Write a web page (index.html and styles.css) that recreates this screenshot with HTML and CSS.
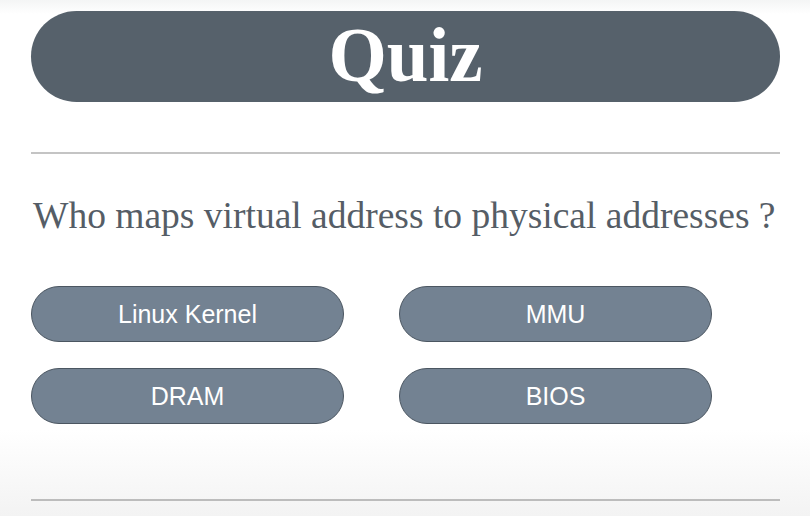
FILE: index.html
```html
<!DOCTYPE html>
<html>
<head>
<meta charset="utf-8">
<link rel="stylesheet" href="styles.css">
</head>
<body>
<main class="quiz">
  <header class="title-bar"><h1 class="title">Quiz</h1></header>
  <hr class="rule rule-top">
  <p class="question">Who maps virtual address to physical addresses ?</p>
  <div class="answers">
    <button class="answer">Linux Kernel</button>
    <button class="answer">MMU</button>
    <button class="answer">DRAM</button>
    <button class="answer">BIOS</button>
  </div>
  <hr class="rule rule-bottom">
</main>
</body>
</html>
```
FILE: styles.css
```css
html, body {
  margin: 0;
  height: 100%;
}
body {
  background: linear-gradient(to bottom, #f4f5f5 0px, #ffffff 14px, #ffffff 430px, #f3f3f3 516px);
  font-family: "Liberation Serif", "Times New Roman", serif;
}
.quiz {
  padding: 11px 30px 0 31px;
  display: flex;
  flex-direction: column;
}
.title-bar {
  height: 91px;
  background: #56616b;
  border-radius: 46px;
  display: flex;
  align-items: center;
  justify-content: center;
}
.title {
  margin: 0;
  color: #ffffff;
  font-size: 75px;
  font-weight: bold;
  line-height: 1;
  padding-bottom: 4px;
  transform: scaleY(1.05);
}
.rule {
  border: none;
  height: 2px;
  background: #c4c4c4;
  margin: 0;
}
.rule-top {
  margin-top: 50px;
}
.question {
  margin: 41px 0 0 2px;
  font-size: 37.5px;
  line-height: 42px;
  color: #555d66;
}
.answers {
  margin-top: 49px;
  display: grid;
  grid-template-columns: 313px 313px;
  column-gap: 55px;
  row-gap: 26px;
}
.answer {
  height: 56px;
  border: 1px solid #4b5661;
  border-radius: 28px;
  background: #738292;
  color: #ffffff;
  font-family: "Liberation Sans", Arial, sans-serif;
  font-size: 25px;
  padding: 0;
}
.rule-bottom {
  margin-top: 75px;
  background: #bcbcbc;
}
```
